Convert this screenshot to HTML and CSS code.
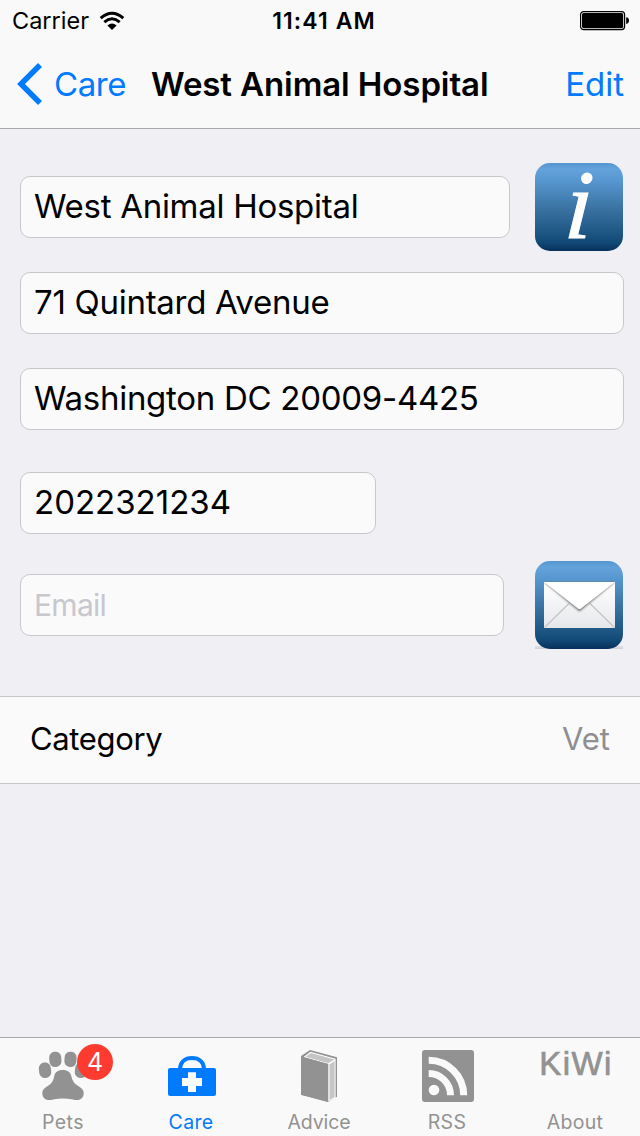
FILE: index.html
```html
<!DOCTYPE html>
<html lang="en">
<head>
<meta charset="utf-8">
<title>West Animal Hospital</title>
<link rel="stylesheet" href="styles.css">
</head>
<body>
<div class="screen">
  <header class="header">
    <div class="status">
      <div class="status-left">
        <span class="carrier">Carrier</span>
        <svg class="wifi" width="26" height="20" viewBox="0 0 26 20"><g fill="none" stroke="#000" stroke-width="3"><path d="M1.700 7.200Q13-2.800 24.300 7.200"/><path d="M5.300 11.100Q13 4.500 20.700 11.100"/></g><path d="M8.400 14.400Q13 10.600 17.600 14.400L13 19Z"/></svg>
      </div>
      <span class="clock">11:41 AM</span>
      <div class="status-right">
        <svg width="49" height="20" viewBox="0 0 49 20"><rect x=".6" y=".6" width="44" height="18" rx="3" fill="none" stroke="#000" stroke-width="1.2"/><rect x="2" y="2" width="41.200" height="15.200" rx="1.700"/><path d="M46.200 6.300Q49 6.600 49 9.600Q49 12.600 46.200 12.900Z"/></svg>
      </div>
    </div>
    <nav class="nav">
      <a class="back"><svg width="28" height="44" viewBox="0 0 28 44"><path d="M25 3L6 22L25 41" fill="none" stroke="#007aff" stroke-width="5.500"/></svg><span class="back-label">Care</span></a>
      <h1 class="title">West Animal Hospital</h1>
      <a class="edit">Edit</a>
    </nav>
  </header>

  <main class="content">
    <div class="row row-name">
      <div class="field"><span class="value-name">West Animal Hospital</span></div>
      <svg class="square" width="88" height="88" viewBox="0 0 88 88">
        <defs><linearGradient id="blue" x1="0" y1="0" x2="0" y2="1"><stop offset="0" stop-color="#5596ce"/><stop offset=".07" stop-color="#64a2dc"/><stop offset=".2" stop-color="#5797cf"/><stop offset=".55" stop-color="#376f9f"/><stop offset=".9" stop-color="#124a77"/><stop offset="1" stop-color="#07305b"/></linearGradient></defs>
        <rect width="88" height="88" rx="15" fill="url(#blue)"/>
        <text class="info-mark" transform="translate(28.500 74.500) skewX(-4)">i</text>
      </svg>
    </div>
    <div class="field row-street"><span class="value-street">71 Quintard Avenue</span></div>
    <div class="field row-city"><span class="value-city">Washington DC 20009-4425</span></div>
    <div class="field row-phone"><span class="value-phone">2022321234</span></div>
    <div class="row row-email">
      <div class="field"><span class="placeholder">Email</span></div>
      <svg class="square" width="88" height="88" viewBox="0 0 88 88">
        <defs>
          <linearGradient id="paper" x1="0" y1="0" x2="0" y2="1"><stop offset="0" stop-color="#fff"/><stop offset="1" stop-color="#e5e8eb"/></linearGradient>
          <linearGradient id="shade" x1="0" y1="0" x2="0" y2="1"><stop offset="0" stop-color="#e2e2e6"/><stop offset="1" stop-color="#cfcfd3"/></linearGradient>
          <filter id="soft" x="-20%" y="-20%" width="140%" height="160%"><feGaussianBlur stdDeviation="1"/></filter>
        </defs>
        <rect y="85" width="88" height="3" fill="url(#shade)"/>
        <rect width="88" height="88" rx="15" fill="url(#blue)"/>
        <rect x="9" y="21" width="71" height="46" fill="url(#paper)"/>
        <path d="M9.500 66.500L34 42.500M79.500 66.500L55 42.500" stroke="#c3c5c7" stroke-width="1.200"/>
        <path d="M9 21L44.500 50.500L80 21Z" fill="#777" filter="url(#soft)"/>
        <path d="M9 21H80L46 47.500Q44.500 48.600 43 47.500Z" fill="#fff"/>
      </svg>
    </div>
    <div class="category"><span class="category-name">Category</span><span class="category-value">Vet</span></div>
  </main>

  <footer class="tabs">
    <div class="tab">
      <svg class="icon" viewBox="0 0 60 60"><g fill="#929292"><rect x="6" y="17.500" width="12" height="15.500" rx="5.600" transform="rotate(-6 12 25)"/><rect x="16.300" y="6.700" width="12" height="15.300" rx="5.600" transform="rotate(-4 22 14)"/><rect x="31.500" y="6.700" width="12" height="15.300" rx="5.600" transform="rotate(4 37 14)"/><rect x="42" y="17.500" width="12" height="15.500" rx="5.600" transform="rotate(6 48 25)"/><path d="M29.700 25C35 25 37.500 27.500 38.300 31C39 35 41 38.500 44.500 40.500C49 43 51 45.500 50.700 48.500C50.500 54.500 45 56 40 54.500C33 53 27 53 20 54.500C15 56 9.500 54.500 9.300 48.500C9 45.500 11 43 15.500 40.500C19 38.500 20.500 35 21.300 31C22 27.500 24.500 25 29.700 25Z"/></g></svg>
      <span class="badge">4</span>
      <span class="label label-pets">Pets</span>
    </div>
    <div class="tab tab-active">
      <svg class="icon" viewBox="0 0 60 60"><path d="M19 24.500C19 17 24 13 31 13S43 17 43 24.500" fill="none" stroke="#007aff" stroke-width="4"/><rect x="7" y="23" width="48" height="28" rx="2" fill="#007aff"/><path d="M27 27.300H35V33H41V41H35V47H27V41H21V33H27Z" fill="#fafafa"/></svg>
      <span class="label label-care">Care</span>
    </div>
    <div class="tab">
      <svg class="icon" viewBox="0 0 60 60"><path d="M12 11L21 5L48 12.300V52L46 52.500L39.300 57L12 49.700Z" fill="#929292"/><path d="M14.500 12L21.500 6.800L46.600 13.800V52.500L39.300 56.700V19Z" fill="#fff"/><path d="M16.500 11.800L22 8L45.500 14.500L39.300 18.200Z" fill="#c5c5c5"/><path d="M40.500 19.500L45.600 16V52L40.500 55Z" fill="#c5c5c5"/><path d="M12 11.500L39 19V57L12 49.700Z" fill="#929292"/></svg>
      <span class="label label-advice">Advice</span>
    </div>
    <div class="tab">
      <svg class="icon" viewBox="0 0 60 60"><rect x="5" y="5" width="52" height="52" rx="3" fill="#929292"/><circle cx="17" cy="45" r="5.300" fill="#fafafa"/><g fill="none" stroke="#fafafa" stroke-width="7"><path d="M11.700 28.500A21.800 21.800 0 0 1 33.500 50.300"/><path d="M11.700 15.300A35 35 0 0 1 46.700 50.300"/></g></svg>
      <span class="label label-rss">RSS</span>
    </div>
    <div class="tab">
      <span class="icon kiwi">KiWi</span>
      <span class="label label-about">About</span>
    </div>
  </footer>
</div>
</body>
</html>
```
FILE: styles.css
```css
* { box-sizing: border-box; }
body { margin: 0; font-family: Inter, "Liberation Sans", sans-serif; color: #000; }
.screen { width: 640px; height: 1136px; display: flex; flex-direction: column; background: #efeff4; overflow: hidden; white-space: nowrap; }
.header { height: 129px; background: #f9f9f9; border-bottom: 1px solid #a7a7ab; }
.status { height: 40px; padding: 1px 11px 0 12px; display: grid; grid-template-columns: 1fr auto 1fr; align-items: center; }
.status-left { display: flex; align-items: center; gap: 10px; }
.carrier { font-size: 23.5px; }
.clock { font-size: 23px; font-weight: 600; letter-spacing: 1.1px; margin-left: 7px; }
.status-right { display: flex; justify-content: flex-end; }
.nav { height: 88px; display: grid; grid-template-columns: 151px 1fr auto; align-items: center; padding: 0 16px 0 0; font-size: 33px; }
.back { display: flex; align-items: center; gap: 11px; padding-left: 15px; color: #007aff; letter-spacing: -0.4px; }
.title { margin: 0; font-size: 33px; font-weight: 600; letter-spacing: -0.1px; }
.edit { color: #007aff; }

.content { flex: 1; display: flex; flex-direction: column; }
.field { height: 62px; padding: 0 13px 2px; display: flex; align-items: center; border: 1px solid #c8c8cc; border-radius: 10px; background: #fafafa; font-size: 33px; letter-spacing: -0.28px; }
.row { display: flex; align-items: center; justify-content: space-between; height: 88px; margin: 0 17px 0 20px; }
.row-name { margin-top: 34px; }
.row-name .field { width: 490px; }
.row-street, .row-city { width: 604px; margin-left: 20px; }
.row-street { margin-top: 21px; }
.row-city { margin-top: 34px; }
.row-phone { width: 356px; margin: 42px 0 0 20px; letter-spacing: 0; }
.row-email { margin-top: 27px; }
.row-email .field { width: 484px; padding: 0 13px; }
.placeholder { font-size: 30px; color: #c7c7cd; letter-spacing: -0.7px; }
.square { overflow: visible; }
.info-mark { font: italic 98px/1 "Liberation Serif", serif; fill: #fff; stroke: #fff; stroke-width: 1px; }
.category { height: 88px; margin-top: 47px; padding: 0 30px 3px; display: flex; align-items: center; justify-content: space-between; background: #fafafa; border: solid #c8c7cc; border-width: 1px 0; font-size: 31px; }
.category-name { letter-spacing: -0.35px; }
.category-value { color: #8e8e93; }

.tabs { height: 99px; display: grid; grid-template-columns: repeat(5, 128px); background: #f9f9f9; border-top: 1px solid #a7a7ab; }
.tab { position: relative; display: flex; flex-direction: column; align-items: center; padding: 7px 2px 0 0; color: #929292; }
.tab-active { color: #007aff; }
.icon { width: 60px; height: 60px; }
.label { font-size: 19.5px; line-height: 24px; margin-top: 5px; letter-spacing: 0.3px; }
.label-pets { letter-spacing: 0.5px; }
.label-advice { letter-spacing: -0.1px; }
.badge { position: absolute; left: 77px; top: 6px; width: 36px; height: 36px; border-radius: 50%; background: #ff3b30; color: #fff; font-size: 25px; line-height: 36px; text-align: center; }
.kiwi { font-family: "Liberation Sans", sans-serif; font-size: 33px; line-height: 37px; letter-spacing: 1.4px; width: auto; padding-left: 2px; -webkit-text-stroke: 0.7px #929292; }
```
